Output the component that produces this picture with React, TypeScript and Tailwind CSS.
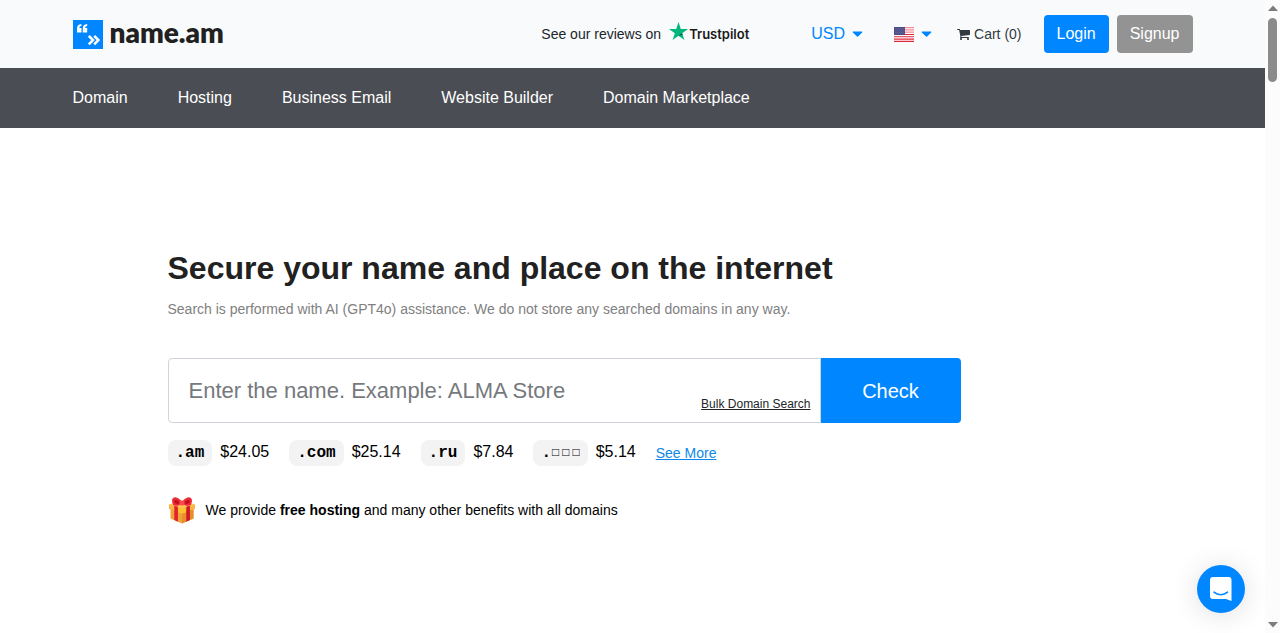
import React from "react";

const NAV_LINKS = ["Domain", "Hosting", "Business Email", "Website Builder", "Domain Marketplace"];

const TLDS = [
  { name: ".am", boxes: "", price: "$24.05" },
  { name: ".com", boxes: "", price: "$25.14" },
  { name: ".ru", boxes: "", price: "$7.84" },
  { name: ".", boxes: "□□□", price: "$5.14" },
];

function Caret() {
  return (
    <svg viewBox="0 0 12 7" className="h-[7px] w-3 shrink-0" fill="#0087ff" aria-hidden="true">
      <path d="M1.3 0.4h8.4c0.6 0 0.9 0.7 0.5 1.1L6.1 5.600c-0.3 0.3-0.8 0.3-1.1 0L0.8 1.5C0.4 1.1 0.7 0.4 1.3 0.4z" />
    </svg>
  );
}

function CartIcon() {
  return (
    <svg viewBox="0 0 1664 1792" className="h-3.5 w-[13px] shrink-0" fill="currentColor" aria-hidden="true">
      <path d="M640 1536q0 52-38 90t-90 38-90-38-38-90 38-90 90-38 90 38 38 90zm896 0q0 52-38 90t-90 38-90-38-38-90 38-90 90-38 90 38 38 90zm128-1088v512q0 24-16.500 42.500t-40.500 21.500l-1044 122q13 60 13 70 0 16-24 64h920q26 0 45 19t19 45-19 45-45 19h-1024q-26 0-45-19t-19-45q0-11 8-31.500t16-36 21.500-40 15.500-29.500l-177-823h-204q-26 0-45-19t-19-45 19-45 45-19h256q16 0 28.500 6.500t19.500 15.500 13 24.500 8 26 5.500 29.500 4.500 26h1201q26 0 45 19t19 45z" />
    </svg>
  );
}

function LogoMark() {
  return (
    <svg viewBox="0 0 30 29" className="h-[29px] w-[30px] shrink-0" aria-hidden="true">
      <rect width="30" height="29" fill="#0087ff" />
      <g fill="#fff">
        <path d="M8.4 4v1.9C7 6.1 6.4 6.8 6.4 7.9h2.1v4.6H4V8.6C4 5.8 5.5 4.2 8.4 4z" />
        <path d="M14.2 4v1.9c-1.4 0.2-2 0.9-2 2h2v4.6H9.8V8.6C9.8 5.8 11.300 4.2 14.200 4z" />
      </g>
      <path d="M15.800 15.800l4.200 4.300-4.200 4.300M21.200 15.800l4.200 4.300-4.200 4.300" fill="none" stroke="#fff" strokeWidth="2.600" />
    </svg>
  );
}

function TrustpilotStar() {
  return (
    <svg viewBox="0 0 19 18" className="h-[18px] w-[19px] shrink-0" aria-hidden="true">
      <path d="M9.500 0l2.250 6.880H19l-5.870 4.250L15.370 18 9.500 13.750 3.630 18l2.240-6.870L0 6.880h7.250z" fill="#00b67a" />
      <path d="M13.630 12.700l-0.500-1.570-3.630 2.620z" fill="#005128" />
    </svg>
  );
}

function UsFlag() {
  return (
    <svg viewBox="0 0 20 15" className="h-[15px] w-5 shrink-0" aria-hidden="true">
      <rect width="20" height="15" fill="#fff" />
      <g fill="#f28a94">
        <path d="M0 0h20v1.150H0zM0 2.300h20v1.150H0zM0 4.600h20v1.150H0z" />
      </g>
      <g fill="#e0283c">
        <path d="M0 6.900h20v1.150H0zM0 9.200h20v1.150H0zM0 11.500h20v1.150H0zM0 13.850h20V15H0z" />
      </g>
      <rect width="11" height="8.050" fill="#4a4a86" />
      <g fill="none" stroke="#8f8fb8" strokeWidth="0.600" strokeDasharray="0.800 1">
        <path d="M0.800 1.300h9.800M1.700 2.700h8.600M0.800 4.100h9.800M1.700 5.500h8.600M0.800 6.900h9.800" />
      </g>
    </svg>
  );
}

function Gift() {
  return (
    <svg viewBox="0 0 28 28" className="size-7 shrink-0" aria-hidden="true">
      <path d="M2.500 11l11.500 4 11.500-4v11.500L14 27.500 2.500 22.500z" fill="#f0a338" />
      <path d="M14 14l11.500-3v11.500l-11.500 5z" fill="#e78f2d" />
      <path d="M1 8.500L14 5l13 3.500v4.500L14 16.500 1 13z" fill="#f9b548" />
      <path d="M1 8.500L14 12l13-3.500L14 5z" fill="#fdc95c" />
      <path d="M6.300 9.800l3.600 1v15L6.300 24z" fill="#e3202c" />
      <path d="M18.300 10.800l3.600-1V24l-3.600 1.700z" fill="#cf1826" />
      <path d="M10 13c1-1.600 7-1.600 8 0v3.500l-4 1.300-4-1.300z" fill="#ffc02e" />
      <path d="M14 7C11 10 8 10.500 5 9l-1-4c0-3.500 3-4.500 5.500-3C11.500 3 13 4.500 14 6c1-1.500 2.500-3 4.500-4C21 0.500 24 1.500 24 5l-1 4c-3 1.500-6 1-9-2z" fill="#ef2933" />
      <path d="M6.500 6.500C6 3.800 8 3.500 9.500 4.800L12 7c-2 1-3.800 1-5.500-0.500zM21.500 6.500c0.500-2.700-1.500-3-3-1.700L16 7c2 1 3.800 1 5.500-0.500z" fill="#b90f20" />
      <rect x="11.700" y="4.500" width="4.600" height="5" rx="1.600" fill="#ff4a4d" />
    </svg>
  );
}

function Header() {
  return (
    <header className="bg-[#f8fafc]">
      <div className="mx-auto flex h-[68px] max-w-[1140px] items-center px-2.5">
        <a href="#" className="flex items-center gap-[7px]" aria-label="name.am">
          <LogoMark />
          <span className="pb-1 font-[Lato,sans-serif] text-[28px] leading-7 font-extrabold text-[#212121]">name.am</span>
        </a>
        <div className="ml-auto flex items-center">
          <a href="#" className="mr-[62px] flex items-center gap-2 text-sm">
            <span>See our reviews on</span>
            <span className="flex items-center gap-px">
              <span className="pb-1.5"><TrustpilotStar /></span>
              <span className="font-[Inter,sans-serif] text-[13px] font-semibold text-[#191919]">Trustpilot</span>
            </span>
          </a>
          <button type="button" className="mr-[30px] flex items-center gap-[7px] text-base text-[#0087ff]">
            USD <Caret />
          </button>
          <button type="button" className="mr-6 flex items-center gap-[7px]" aria-label="Language">
            <UsFlag /> <Caret />
          </button>
          <a href="#" className="mr-[22px] flex items-center gap-1 text-sm text-[#343a40]">
            <CartIcon /> Cart (0)
          </a>
          <div className="flex gap-2">
            <button type="button" className="rounded bg-[#0087ff] px-[13px] py-[7px] text-base text-white">Login</button>
            <button type="button" className="rounded bg-[#939393] px-[13px] py-[7px] text-base text-white">Signup</button>
          </div>
        </div>
      </div>
      <nav className="bg-[#4a4d53]">
        <ul className="mx-auto flex h-[60px] max-w-[1140px] items-center gap-[50px] px-2.5">
          {NAV_LINKS.map((label) => (
            <li key={label}>
              <a href="#" className="text-base text-white">{label}</a>
            </li>
          ))}
        </ul>
      </nav>
    </header>
  );
}

function Hero() {
  return (
    <main className="mx-auto max-w-[1140px] pr-2.5 pl-[105px]">
      <div className="max-w-[793px] pt-[120px]">
        <h1 className="text-[32px] leading-10 font-bold text-[#212121]">Secure your name and place on the internet</h1>
        <p className="mt-[11px] text-sm text-[#808080]">
          Search is performed with AI (GPT4o) assistance. We do not store any searched domains in any way.
        </p>
        <form className="mt-[39px] flex h-[65px]" onSubmit={(e) => e.preventDefault()}>
          <div className="relative flex-1">
            <input
              type="text"
              aria-label="Domain name"
              placeholder="Enter the name. Example: ALMA Store"
              className="h-full w-full rounded-l border border-[#ced4da] bg-white px-5 text-[22px] text-[#212529] outline-none placeholder:text-[#75797d]"
            />
            <a href="#" className="absolute right-2.5 bottom-[11px] text-xs text-[#212529] underline">Bulk Domain Search</a>
          </div>
          <button type="submit" className="w-[140px] rounded-r bg-[#0087ff] text-xl text-white">Check</button>
        </form>
        <div className="mt-[17px] flex items-center gap-5 text-base text-black">
          {TLDS.map((tld) => (
            <div key={tld.price} className="flex h-[26px] items-start gap-2">
              <span className="flex rounded-lg bg-[#f3f3f3] px-2 font-['Liberation_Mono',monospace] leading-[26px] font-bold">
                {tld.name}
                {tld.boxes && (
                  <span className="flex gap-[3px] pl-px text-xs leading-[26px]">
                    {[...tld.boxes].map((box, i) => (
                      <span key={i}>{box}</span>
                    ))}
                  </span>
                )}
              </span>
              <span>{tld.price}</span>
            </div>
          ))}
          <a href="#" className="text-sm text-[#0d87e9] underline">See More</a>
        </div>
        <div className="mt-[30px] flex items-center gap-2.5 text-sm text-black">
          <Gift />
          <p>
            We provide <strong>free hosting</strong> and many other benefits with all domains
          </p>
        </div>
      </div>
    </main>
  );
}

function ChatLauncher() {
  return (
    <button
      type="button"
      aria-label="Open chat"
      className="fixed right-[35px] bottom-5 flex size-12 items-center justify-center rounded-full bg-[#0087ff] shadow-[0_2px_28px_rgba(0,0,0,0.13)]"
    >
      <svg viewBox="0 0 24 26" className="h-[26px] w-6" aria-hidden="true">
        <path d="M4 1h15.500a3 3 0 0 1 3 3v21l-5.500-2H4a3 3 0 0 1-3-3V4a3 3 0 0 1 3-3z" fill="#fff" />
        <path d="M5 16.200c4 3.300 9.500 3.300 13.500 0" fill="none" stroke="#0087ff" strokeWidth="1.600" strokeLinecap="round" />
      </svg>
    </button>
  );
}

function ScrollRail() {
  return (
    <div className="flex w-[15px] shrink-0 flex-col items-center bg-[#fcfcfc] py-[5px]" aria-hidden="true">
      <svg viewBox="0 0 10 6" className="h-1.5 w-2.5" fill="#7c7c7c"><path d="M5 0.500L10 6H0z" /></svg>
      <div className="mt-[7px] h-16 w-[9px] rounded-full bg-[#8b8b8b]" />
      <svg viewBox="0 0 10 6" className="mt-auto h-1.5 w-2.5" fill="#7c7c7c"><path d="M5 5.500L10 0H0z" /></svg>
    </div>
  );
}

export default function App() {
  return (
    <div className="flex h-screen overflow-hidden bg-white font-['Liberation_Sans',Arial,sans-serif] text-[#212529]">
      <div className="min-w-0 flex-1">
        <Header />
        <Hero />
      </div>
      <ScrollRail />
      <ChatLauncher />
    </div>
  );
}
